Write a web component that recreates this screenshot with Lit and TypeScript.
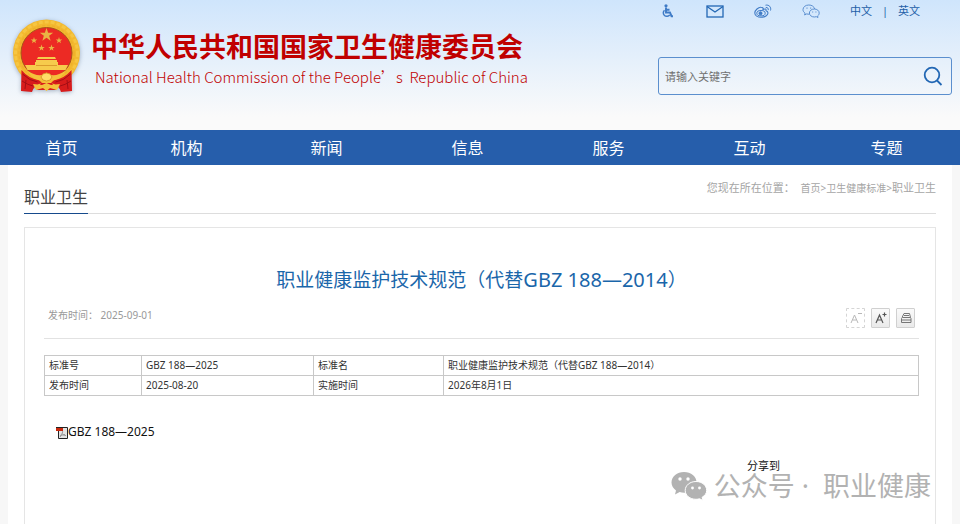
import { LitElement, html, svg, css } from "lit";
import { customElement } from "lit/decorators.js";

const star = (cx: number, cy: number, r: number) => {
  const pts: string[] = [];
  for (let i = 0; i < 10; i++) {
    const a = -Math.PI / 2 + (i * Math.PI) / 5;
    const q = i % 2 ? r * 0.4 : r;
    pts.push(`${(cx + q * Math.cos(a)).toFixed(2)},${(cy + q * Math.sin(a)).toFixed(2)}`);
  }
  return svg`<polygon points=${pts.join(" ")} fill="#e9b544"/>`;
};

@customElement("state-emblem")
export class StateEmblem extends LitElement {
  static styles = css`
    :host { display: block; flex: none; width: 70px; height: 74px; }
    .art { display: block; overflow: visible; filter: drop-shadow(0 1px 2px rgba(90, 110, 140, 0.5)); }
  `;
  render() {
    return html`<svg class="art" width="70" height="74" viewBox="0 0 70 74" role="img" aria-label="国徽">
      <circle cx="34.500" cy="34" r="33.500" fill="#f3b92f"/>
      <circle cx="34.500" cy="34" r="31" fill="none" stroke="#f6c642" stroke-width="3" stroke-dasharray="4 2"/>
      <circle cx="34.500" cy="34" r="27.500" fill="none" stroke="#eeb02c" stroke-width="1.500" stroke-dasharray="3 2"/>
      <circle cx="34.500" cy="34" r="25.500" fill="#ec2a24" stroke="#a8541a" stroke-width="1"/>
      ${star(34.5, 16, 7)}${star(22, 21.5, 3.4)}${star(47, 21.5, 3.4)}${star(29.5, 29, 3.4)}${star(39.5, 29, 3.4)}
      <path d="M26 38h17l1 2H25zM24 41h21v2h1v3H23v-3h1zM13 46h43l-2.500 5h-38z" fill="#f6cb4c"/>
      <path d="M24 46.500h21" stroke="#cf8a20" stroke-width=".7"/>
      <path d="M9.500 51Q17 60 27 61l3 3q-8 2-10 9l-11-1z" fill="#d81c1c"/>
      <path d="M59.500 51Q52 60 42 61l-3 3q8 2 10 9l11-1z" fill="#d81c1c"/>
      <path d="M10.500 55q7 7 15 8M10 62q6 4 11 5M14 61l-1 9M58.500 55q-7 7-15 8M59 62q-6 4-11 5M55 61l1 9" fill="none" stroke="#a40f15"/>
      <path d="M16 52q7 5 14 4l4.500-2.500L39 56q7 1 14-4-3 7-10 9l-4 1-4.500 2-4.500-2-4-1q-7-2-10-9z" fill="#f5c03c"/>
      <path d="M29 58q1-4 5.500-4T40 58q-1 4-5.500 4T29 58z" fill="#ffdc68" stroke="#d28a1c" stroke-width=".8"/>
      <path d="M29 64h11l4 7H25z" fill="#d81c1c"/>
      <path d="M21 65l9 1 4.500-2 4.500 2 9-1-3 6-7-2-3.500 3-3.500-3-7 2z" fill="#f3c23c"/>
    </svg>`;
  }
}

const accessIcon = html`<svg width="18" height="14" viewBox="-3 0 18 14" aria-hidden="true" fill="none" stroke="#3f7bc6">
  <circle cx="5" cy="1.800" r="1.600" fill="#3f7bc6" stroke="none"/>
  <path d="M5 3.500V8.500H9L10.500 12.200H12M5 5.800H8.500" stroke-width="1.900"/>
  <path d="M3.500 6.200a3.500 3.500 0 1 0 5.200 4.600" stroke-width="1.500"/></svg>`;
const mailIcon = html`<svg width="18" height="13" viewBox="0 0 18 13" aria-hidden="true" fill="none" stroke="#2267b4" stroke-width="1.300">
  <rect x="1" y="1" width="16" height="11"/><path d="M1 1.500L9 7L17 1.500"/></svg>`;
const weiboIcon = html`<svg width="18" height="14" viewBox="0 0 18 14" aria-hidden="true" fill="none" stroke="#3f7bc6">
  <path d="M7 3.200C4.500 3 .8 6.200 .8 9c0 2.600 3 4.200 6.200 4.200 4 0 7-2 7-4.200 0-1.400-1-2-2-2.300.4-1.700-.7-2.200-3-1.200C9.500 4 8.800 3.300 7 3.200z" stroke-width="1.100"/>
  <ellipse cx="7" cy="9.200" rx="4.200" ry="2.700"/><circle cx="6.500" cy="9.300" r="1.500" fill="#3f7bc6"/>
  <path d="M11.500 1.200c3.500-.8 6 2 5 5.300M11.800 3.500c1.700-.3 2.900 1 2.400 2.600"/></svg>`;
const wechatIcon = html`<svg width="18" height="14" viewBox="0 0 18 14" aria-hidden="true" fill="none" stroke="#5b8fd0">
  <path d="M12.800 5C12 2.500 9.800 1 6.800 1 3.500 1 1 3 1 5.600c0 1.600.8 2.700 2.100 3.500L2.600 11l2.100-1.100c.9.300 1.800.3 2.700.3"/>
  <path d="M12.300 5c-2.800 0-4.900 1.800-4.900 4s2.100 4 4.900 4c.7 0 1.400-.1 2-.3l1.700.8-.4-1.500c1-.7 1.600-1.800 1.600-3 0-2.200-2.100-4-4.900-4z"/>
  <path d="M4.500 4.200h1M8.200 4.200h1M10.200 8h1M13.400 8h1" stroke-width="1.200"/></svg>`;

const NAV = ["首页", "机构", "新闻", "信息", "服务", "互动", "专题"];

@customElement("site-header")
export class SiteHeader extends LitElement {
  static styles = css`
    :host { display: block; }
    a { color: inherit; text-decoration: none; }
    .top {
      display: flex; justify-content: space-between; height: 130px; box-sizing: border-box;
      padding: 0 8px 0 12px; background: linear-gradient(#cfe5fc, #fafafa 90%);
    }
    .brand { display: flex; gap: 9px; padding-top: 19px; color: #c00000; }
    .names { padding-top: 7px; white-space: nowrap; }
    .cn { margin: 0; font: 700 27px/40px "Noto Sans CJK SC", sans-serif; }
    .en { margin: 0; padding-left: 4px; font: 300 15px/22px "Noto Sans CJK SC", sans-serif; }
    .side { width: 294px; flex: none; }
    .tools { display: flex; align-items: center; height: 22px; color: #1f5fa8; font-size: 11px; line-height: 20px; }
    .icons { display: grid; grid-template-columns: repeat(4, 48px); }
    .icons a { display: flex; align-items: center; height: 22px; }
    .langs { display: flex; gap: 10px; }
    .search {
      display: flex; align-items: center; height: 38px; margin-top: 35px; box-sizing: border-box;
      border: 1px solid #5b8fce; border-radius: 3px; padding: 0 8px 0 6px;
    }
    .field { flex: 1; min-width: 0; border: 0; padding: 0; background: none; outline: none; font: inherit; font-size: 11px; color: #555; }
    .field::placeholder { color: #707070; opacity: 1; }
    .go { border: 0; padding: 0; background: none; display: flex; cursor: pointer; }
    .nav { background: #265eab; }
    .menu {
      display: grid; grid-template-columns: 111fr 139fr 141fr 141fr 141fr 141fr 133fr;
      margin: 0; padding: 2px 7px 0 6px; list-style: none; text-align: center;
      color: #fff; font-size: 16px; line-height: 33px;
    }
  `;
  render() {
    return html`
      <header class="top">
        <div class="brand">
          <state-emblem></state-emblem>
          <div class="names">
            <h1 class="cn">中华人民共和国国家卫生健康委员会</h1>
            <p class="en">National Health Commission of the People’s&nbsp; Republic of China</p>
          </div>
        </div>
        <div class="side">
          <div class="tools">
            <div class="icons">
              <a href="#" aria-label="无障碍">${accessIcon}</a>
              <a href="#" aria-label="邮箱">${mailIcon}</a>
              <a href="#" aria-label="微博">${weiboIcon}</a>
              <a href="#" aria-label="微信">${wechatIcon}</a>
            </div>
            <div class="langs"><a href="#">中文</a><span>|</span><a href="#">英文</a></div>
          </div>
          <form class="search" role="search">
            <input class="field" type="text" aria-label="搜索" placeholder="请输入关键字">
            <button class="go" type="button" aria-label="搜索">
              <svg width="20" height="20" viewBox="0 0 20 20" fill="none" stroke="#2267b4" stroke-width="1.800">
                <circle cx="9" cy="9" r="7.300"/><path d="M14 14.500L18.500 19"/>
              </svg>
            </button>
          </form>
        </div>
      </header>
      <nav class="nav"><ul class="menu">${NAV.map((t) => html`<li><a href="#">${t}</a></li>`)}</ul></nav>`;
  }
}

const pdfIcon = html`<svg width="12" height="13" viewBox="0 0 12 13" aria-hidden="true">
  <path d="M2.500 1.500H11.500V12.500H2.500z" fill="#e4e4e4" stroke="#222"/>
  <path d="M4 11c2-2 3-5 2.500-6.500M6 7.500c1 1.500 2.500 2 4 2M4 9.500l5-1" stroke="#999" fill="none"/>
  <path d="M0 2h7v3H0z" fill="#c9280d"/><path d="M0 1.500h8" stroke="#222"/></svg>`;

@customElement("app-root")
export class AppRoot extends LitElement {
  static styles = css`
    :host {
      display: flex; flex-direction: column; position: relative; min-height: 100vh;
      background: #f7f7f7; color: #333; font-family: "Noto Sans", "Noto Sans CJK SC", sans-serif;
    }
    a { color: inherit; text-decoration: none; }
    .page { flex: 1; display: flex; flex-direction: column; margin: 0 8px; padding: 0 16px; background: #fff; }
    .bar { display: flex; justify-content: space-between; height: 48px; border-bottom: 1px solid #ddd; }
    .section { margin: 0; padding-top: 16px; height: 32px; border-bottom: 1px solid #164a8c; font-size: 16px; font-weight: 400; line-height: 32px; color: #444; }
    .crumbs { display: flex; padding-top: 13px; font-size: 11px; line-height: 20px; color: #a5a5a5; }
    .trail { font-size: 10px; }
    .card { flex: 1; margin-top: 13px; border: 1px solid #e5e5e5; border-bottom: 0; padding: 36px 16px 0 19px; }
    .title { margin: 0; text-align: center; font-size: 19px; font-weight: 400; line-height: 32px; color: #1a66aa; }
    .code { font-size: 20px; }
    .meta { display: flex; justify-content: space-between; height: 42px; border-bottom: 1px solid #e2e2e2; padding: 0 4px; font-size: 10px; color: #999; }
    .date { padding-top: 9px; line-height: 20px; }
    .acts { display: flex; gap: 6px; padding-top: 12px; }
    .act { width: 19px; height: 20px; box-sizing: border-box; padding: 0; border: 1px solid #d0d0d0; border-radius: 1px; background: linear-gradient(#fafafa, #eaeaea); display: flex; align-items: center; justify-content: center; }
    .act.off { border: 1px dashed #d5d5d5; background: #fff; }
    .facts { width: 100%; margin-top: 16px; border-collapse: collapse; table-layout: fixed; font-size: 10px; line-height: 19px; }
    .facts th, .facts td { border: 1px solid #c8c8c8; padding: 0 4px; text-align: left; font-weight: 400; }
    .c1 { width: 97px; } .c2 { width: 172px; } .c3 { width: 130px; }
    .file { margin: 26px 0 0; padding-left: 12px; font-size: 12px; line-height: 20px; color: #111; }
    .file a { display: flex; align-items: center; width: fit-content; }
    .share { margin: 14px 0 0; padding-right: 139px; text-align: right; font-size: 11px; line-height: 20px; color: #111; }
    .mark { position: absolute; right: 29px; bottom: 18px; display: flex; align-items: center; gap: 7px; color: #b2b2b2; font-size: 27px; line-height: 40px; white-space: nowrap; }
  `;
  render() {
    return html`
      <site-header></site-header>
      <main class="page">
        <div class="bar">
          <h2 class="section">职业卫生</h2>
          <div class="crumbs"><span>您现在所在位置：&nbsp;&nbsp;</span><span class="trail"><a href="#">首页</a>&gt;<a href="#">卫生健康标准</a>&gt;</span><a href="#">职业卫生</a></div>
        </div>
        <article class="card">
          <h3 class="title">职业健康监护技术规范（代替<span class="code">GBZ 188—2014</span>）</h3>
          <div class="meta">
            <span class="date">发布时间： 2025-09-01</span>
            <div class="acts">
              <button class="act off" type="button" aria-label="缩小字号"><svg width="14" height="14" viewBox="0 0 14 14" fill="none" stroke="#b8b8b8"><path d="M2 12L5.500 4L9 12M3.500 9H7.500M9 2.500H13"/></svg></button>
              <button class="act" type="button" aria-label="放大字号"><svg width="14" height="14" viewBox="0 0 14 14" fill="none" stroke="#555"><path d="M2 12L5.500 4L9 12M3.500 9H7.500M8.500 3.500H12.500M10.500 1.500V5.500" stroke-width="1.200"/></svg></button>
              <button class="act" type="button" aria-label="打印"><svg width="14" height="14" viewBox="0 0 14 14" fill="none" stroke="#777"><path d="M3 6.500L5 2.500H10.500L11.500 6.500M2.500 7.500L3.500 6.500H11.500L12 7.500V11.500H2.500zM2.500 9H12M5 4.500H10" stroke-width="1"/></svg></button>
            </div>
          </div>
          <table class="facts">
            <colgroup><col class="c1"><col class="c2"><col class="c3"><col></colgroup>
            <tbody>
              <tr><th scope="row">标准号</th><td>GBZ 188—2025</td><th scope="row">标准名</th><td>职业健康监护技术规范（代替GBZ 188—2014）</td></tr>
              <tr><th scope="row">发布时间</th><td>2025-08-20</td><th scope="row">实施时间</th><td>2026年8月1日</td></tr>
            </tbody>
          </table>
          <p class="file"><a href="#">${pdfIcon}<span>GBZ 188—2025</span></a></p>
          <p class="share">分享到</p>
        </article>
      </main>
      <div class="mark">
        <svg width="36" height="30" viewBox="0 0 36 30" aria-hidden="true">
          <path d="M13 1C6 1 .5 5.500 .5 11.500c0 3.300 1.800 6 4.500 8L4 23.500l4.700-2.400c1.400.4 2.800.6 4.300.6 7 0 12.500-4.500 12.500-10.300S20 1 13 1z" fill="#b2b2b2"/>
          <path d="M25 10.500c-6 0-10.800 3.900-10.800 8.900s4.800 8.900 10.800 8.900c1.200 0 2.500-.2 3.600-.5L32 29.500l-.9-3.200c2.800-1.600 4.600-4.100 4.600-6.900 0-5-4.700-8.900-10.700-8.900z" fill="#b2b2b2" stroke="#fff"/>
          <g fill="#fff"><circle cx="9" cy="8" r="1.700"/><circle cx="17" cy="8" r="1.700"/><circle cx="21.500" cy="17" r="1.400"/><circle cx="28.500" cy="17" r="1.400"/></g>
        </svg>
        <span>公众号 ·&nbsp; 职业健康</span>
      </div>`;
  }
}
